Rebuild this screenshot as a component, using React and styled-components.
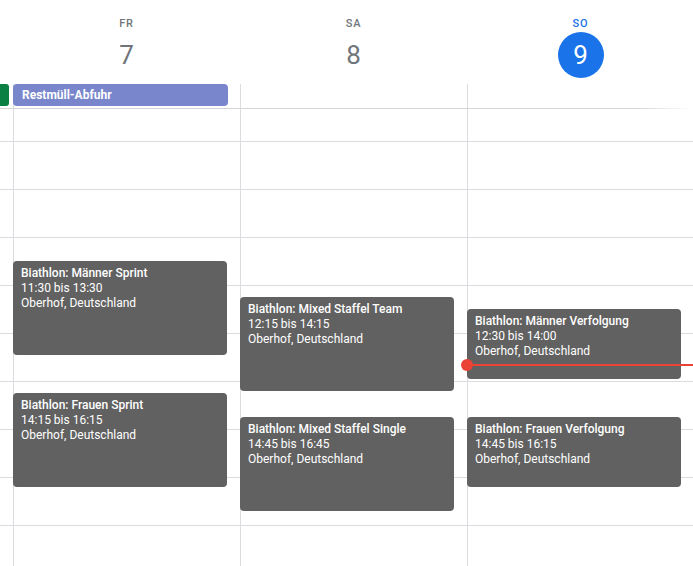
import React from "react";
import styled, { createGlobalStyle } from "styled-components";

const HOUR = 48;
// the grid is scrolled so that 8:20 sits at the top edge of the body
const START = 8 + 20 / 60;

const GlobalStyle = createGlobalStyle`
  body {
    margin: 0;
    background: #fff;
    font-family: Roboto, "Liberation Sans", Arial, sans-serif;
    overflow: hidden;
  }
`;

const Page = styled.div`
  width: 693px;
  height: 566px;
  overflow: hidden;
  display: flex;
  flex-direction: column;
`;

const Columns = styled.div`
  display: grid;
  grid-template-columns: 13px 227px 227px 227px;
`;

const Header = styled(Columns)`
  height: 84px;
`;

const DayHead = styled.div`
  display: flex;
  flex-direction: column;
  align-items: center;
  padding-top: 16px;
`;

const DayLabel = styled.div`
  font-size: 11px;
  line-height: 16px;
  font-weight: 500;
  letter-spacing: 0.8px;
  color: ${(p) => (p.today ? "#1a73e8" : "#70757a")};
`;

const DayNumber = styled.div`
  width: 46px;
  height: 46px;
  border-radius: 50%;
  display: flex;
  align-items: center;
  justify-content: center;
  font-size: 26px;
  font-weight: 400;
  color: ${(p) => (p.today ? "#fff" : "#70757a")};
  background: ${(p) => (p.today ? "#1a73e8" : "transparent")};
`;

const AllDay = styled(Columns)`
  position: relative;
  height: 25px;

  &::after {
    content: "";
    position: absolute;
    left: 0;
    right: 0;
    bottom: 0;
    height: 1px;
    background: linear-gradient(to right, #d6d6d6 92%, rgba(214, 214, 214, 0));
  }
`;

const AllDayCell = styled.div`
  position: relative;
  box-sizing: border-box;
  border-left: ${(p) => (p.gutter ? "none" : "1px solid #dadce0")};
`;

const AllDayChip = styled.div`
  height: 22px;
  width: ${(p) => p.w}px;
  box-sizing: border-box;
  padding-left: 9px;
  margin-left: ${(p) => (p.stub ? "0" : "-1px")};
  border-radius: ${(p) => (p.stub ? "0 3px 3px 0" : "4px")};
  background: ${(p) => p.color};
  color: #fff;
  font-size: 12px;
  line-height: 22px;
  font-weight: 700;
  white-space: nowrap;
  overflow: hidden;
  position: relative;
  z-index: 1;
`;

const Body = styled(Columns)`
  flex: 1;
  overflow: hidden;
`;

const DayColumn = styled.div`
  position: relative;
  box-sizing: border-box;
  border-left: ${(p) => (p.gutter ? "none" : "1px solid #dadce0")};
`;

const HourSlot = styled.div`
  box-sizing: border-box;
  height: ${(p) => (p.partial ? (9 - START) * HOUR : HOUR)}px;
  border-top: ${(p) => (p.partial ? "none" : "1px solid #dadce0")};
`;

const Event = styled.div`
  position: absolute;
  left: -1px;
  width: 214px;
  box-sizing: border-box;
  padding: 5px 8px;
  border-radius: 4px;
  background: #616161;
  color: #fff;
  font-size: 12px;
  line-height: 15px;
  overflow: hidden;
`;

const EventTitle = styled.div`
  font-weight: 500;
`;

const NowLine = styled.div`
  position: absolute;
  left: -1px;
  right: 0;
  height: 2px;
  margin-top: -1px;
  background: #ea4335;
  z-index: 3;

  &::before {
    content: "";
    position: absolute;
    left: -6px;
    top: -5px;
    width: 12px;
    height: 12px;
    border-radius: 50%;
    background: #ea4335;
  }
`;

const days = [
  { label: "FR", num: 7 },
  { label: "SA", num: 8 },
  { label: "SO", num: 9, today: true },
];

const events = [
  [
    { title: "Biathlon: Männer Sprint", from: 11.5, to: 13.5, time: "11:30 bis 13:30" },
    { title: "Biathlon: Frauen Sprint", from: 14.25, to: 16.25, time: "14:15 bis 16:15" },
  ],
  [
    { title: "Biathlon: Mixed Staffel Team", from: 12.25, to: 14.25, time: "12:15 bis 14:15" },
    { title: "Biathlon: Mixed Staffel Single", from: 14.75, to: 16.75, time: "14:45 bis 16:45" },
  ],
  [
    { title: "Biathlon: Männer Verfolgung", from: 12.5, to: 14, time: "12:30 bis 14:00" },
    { title: "Biathlon: Frauen Verfolgung", from: 14.75, to: 16.25, time: "14:45 bis 16:15" },
  ],
];

const hours = [9, 10, 11, 12, 13, 14, 15, 16, 17, 18];
const now = 13 + 40 / 60;

const Slots = () => (
  <>
    <HourSlot partial />
    {hours.map((h) => (
      <HourSlot key={h} />
    ))}
  </>
);

const App = () => {
  return (
    <Page>
      <GlobalStyle />
      <Header>
        <div />
        {days.map((d) => (
          <DayHead key={d.label}>
            <DayLabel today={d.today}>{d.label}</DayLabel>
            <DayNumber today={d.today}>{d.num}</DayNumber>
          </DayHead>
        ))}
      </Header>

      <AllDay>
        <AllDayCell gutter>
          <AllDayChip w={2} stub color="#0b8043" />
        </AllDayCell>
        <AllDayCell>
          <AllDayChip w={215} color="#7986cb">
            Restmüll-Abfuhr
          </AllDayChip>
        </AllDayCell>
        <AllDayCell />
        <AllDayCell />
      </AllDay>

      <Body>
        <DayColumn gutter>
          <Slots />
        </DayColumn>
        {events.map((list, i) => (
          <DayColumn key={i}>
            <Slots />
            {list.map((e) => (
              <Event
                key={e.title}
                style={{
                  top: (e.from - START) * HOUR,
                  height: (e.to - e.from) * HOUR - 2,
                }}
              >
                <EventTitle>{e.title}</EventTitle>
                <div>{e.time}</div>
                <div>Oberhof, Deutschland</div>
              </Event>
            ))}
            {days[i].today && <NowLine style={{ top: (now - START) * HOUR }} />}
          </DayColumn>
        ))}
      </Body>
    </Page>
  );
};

export default App;
